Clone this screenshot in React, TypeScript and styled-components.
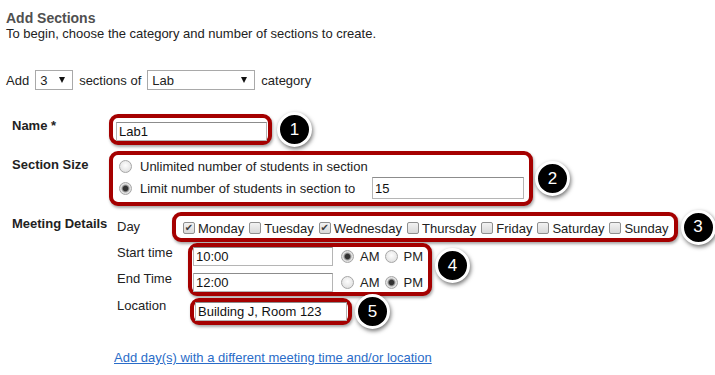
import styled, { createGlobalStyle } from 'styled-components'

const GlobalStyle = createGlobalStyle`
  body {
    margin: 0;
    background: #fff;
    font-family: 'Liberation Sans', Arial, sans-serif;
    font-size: 13px;
    color: #222;
  }
`

const Page = styled.div`
  width: 715px;
  height: 375px;
  box-sizing: border-box;
  padding: 10px 0 0 6px;
  overflow: hidden;
`

const Title = styled.h2`
  margin: 0;
  font-size: 14px;
  line-height: 16px;
  font-weight: bold;
  color: #505050;
`

const Intro = styled.p`
  margin: 0;
  line-height: 16px;
`

const AddRow = styled.div`
  display: flex;
  align-items: center;
  gap: 6px;
  height: 20px;
  margin-top: 28px;
`

const Select = styled.div<{ $w: number }>`
  display: flex;
  align-items: center;
  justify-content: space-between;
  width: ${(p) => p.$w}px;
  height: 20px;
  box-sizing: border-box;
  padding: 0 7px 0 4px;
  border: 1px solid #a9a9a9;
  background: #fff;

  &::after {
    content: '';
    border-left: 3.5px solid transparent;
    border-right: 3.5px solid transparent;
    border-top: 6px solid #111;
  }
`

const Form = styled.div`
  display: grid;
  grid-template-columns: 97px auto;
  row-gap: 6px;
  justify-items: start;
  margin-top: 24px;
  padding-left: 6px;
`

const FieldLabel = styled.div<{ $top: number }>`
  padding-top: ${(p) => p.$top}px;
  line-height: 16px;
  font-weight: bold;
`

const FieldRow = styled.div`
  display: flex;
  align-items: center;
`

const Highlight = styled.div`
  box-sizing: border-box;
  border: 4px solid #a50000;
  border-radius: 9px;
  background: #fff;
  box-shadow: 1px 2px 3px rgba(0, 0, 0, 0.35);
`

const NameBox = styled(Highlight)`
  display: flex;
  padding: 4px 1px 0 3px;
  height: 31px;
`

const SizeBox = styled(Highlight)`
  width: 424px;
  padding: 0 5px 3px 6px;
`

const DayBox = styled(Highlight)`
  display: flex;
  align-items: center;
  gap: 5px;
  height: 30px;
  padding: 2px 5px 0 7px;
`

const TimesBox = styled(Highlight)`
  display: flex;
  flex-direction: column;
  gap: 7px;
  padding: 0 5px 0 1px;
`

const LocationBox = styled(Highlight)`
  display: flex;
  padding: 0 1px;
`

// the numbered markers hang over the row edges, so they never stretch a row
const Callout = styled.span<{ $gap: number; $lift?: number }>`
  display: flex;
  align-items: center;
  justify-content: center;
  flex: none;
  width: 35px;
  height: 35px;
  box-sizing: border-box;
  margin: -6px 0 ${(p) => -6 + (p.$lift ?? 0)}px ${(p) => p.$gap}px;
  border: 3px solid #fff;
  border-radius: 50%;
  background: #000;
  box-shadow: 1px 2px 4px rgba(0, 0, 0, 0.55);
  color: #fff;
  font-size: 17px;
`

const TextInput = styled.input<{ $w: number; $h: number }>`
  width: ${(p) => p.$w}px;
  height: ${(p) => p.$h}px;
  box-sizing: border-box;
  margin: 0;
  padding: 0 2px;
  border: 1px solid #b5b5b5;
  border-top-color: #8c8c8c;
  font: 13px 'Liberation Sans', Arial, sans-serif;
  color: #111;
  outline: none;
`

const OptionRow = styled.label`
  display: flex;
  align-items: center;
  gap: 8px;
  height: 22px;
`

const Radio = styled.input.attrs({ type: 'radio' })`
  appearance: none;
  flex: none;
  width: 13px;
  height: 13px;
  margin: 0;
  border: 1px solid #a6a6a6;
  border-radius: 50%;
  background: radial-gradient(circle at 50% 40%, #fdfdfd 0%, #e6e6e6 65%, #d2d2d2 100%);

  &:checked {
    background: radial-gradient(circle, #333 0 2.2px, #8a8a8a 3.2px, #e4e4e4 4.5px, #d0d0d0 100%);
  }
`

const Checkbox = styled.input.attrs({ type: 'checkbox' })`
  appearance: none;
  display: inline-grid;
  place-content: center;
  flex: none;
  width: 12px;
  height: 12px;
  margin: 0 0 1px;
  border: 1px solid #8f8f8f;
  border-radius: 2px;
  background: linear-gradient(#f2f2f2, #d8d8d8);

  &:checked::after {
    content: '✔';
    font: 10px 'DejaVu Sans', sans-serif;
    line-height: 10px;
    color: #3c3c3c;
  }
`

const Stack = styled.div`
  display: flex;
  flex-direction: column;
  padding-left: 8px;
`

const SubRow = styled.div<{ $align: string; $space: number }>`
  display: flex;
  align-items: ${(p) => p.$align};
  margin-top: ${(p) => p.$space}px;
`

const SubLabel = styled.div<{ $w: number }>`
  flex: none;
  width: ${(p) => p.$w}px;
  line-height: 16px;
`

const TimeLabels = styled.div`
  display: flex;
  flex-direction: column;
  align-self: flex-start;
  gap: 10px;
  width: 71px;
  padding-top: 2px;
  line-height: 16px;
`

const DayOption = styled.label`
  display: flex;
  align-items: center;
  gap: 3px;
`

const TimeRow = styled.div`
  display: flex;
  align-items: center;
  gap: 5px;
  height: 19px;

  & > input[type='text'] {
    margin-right: 3px;
  }
`

const Meridiem = styled.label`
  display: flex;
  align-items: center;
  gap: 6px;
`

const MoreLink = styled.a`
  grid-column: 2;
  margin: 19px 0 0 5px;
  line-height: 16px;
  color: #2a6cc8;
  text-decoration: underline;
`

const days = [
  { name: 'Monday', on: true },
  { name: 'Tuesday', on: false },
  { name: 'Wednesday', on: true },
  { name: 'Thursday', on: false },
  { name: 'Friday', on: false },
  { name: 'Saturday', on: false },
  { name: 'Sunday', on: false },
]

const times = [
  { value: '10:00', pm: false },
  { value: '12:00', pm: true },
]

export default function App() {
  return (
    <Page>
      <GlobalStyle />
      <Title>Add Sections</Title>
      <Intro>To begin, choose the category and number of sections to create.</Intro>

      <AddRow>
        Add
        <Select $w={38}>3</Select>
        sections of
        <Select $w={108}>Lab</Select>
        category
      </AddRow>

      <Form>
        <FieldLabel $top={4}>Name *</FieldLabel>
        <FieldRow>
          <NameBox>
            <TextInput type="text" $w={151} $h={19} defaultValue="Lab1" readOnly />
          </NameBox>
          <Callout $gap={5}>1</Callout>
        </FieldRow>

        <FieldLabel $top={6}>Section Size</FieldLabel>
        <FieldRow>
          <SizeBox>
            <OptionRow>
              <Radio name="size" readOnly />
              Unlimited number of students in section
            </OptionRow>
            <OptionRow>
              <Radio name="size" defaultChecked />
              Limit number of students in section to
              <TextInput
                type="text"
                $w={152}
                $h={22}
                defaultValue="15"
                readOnly
                style={{ marginLeft: 'auto' }}
              />
            </OptionRow>
          </SizeBox>
          <Callout $gap={2}>2</Callout>
        </FieldRow>

        <FieldLabel $top={4}>Meeting Details</FieldLabel>
        <Stack>
          <SubRow $align="center" $space={0}>
            <SubLabel $w={55}>Day</SubLabel>
            <DayBox>
              {days.map((d) => (
                <DayOption key={d.name}>
                  <Checkbox defaultChecked={d.on} />
                  {d.name}
                </DayOption>
              ))}
            </DayBox>
            <Callout $gap={3}>3</Callout>
          </SubRow>

          <SubRow $align="center" $space={1}>
            <TimeLabels>
              <span>Start time</span>
              <span>End Time</span>
            </TimeLabels>
            <TimesBox>
              {times.map((t, i) => (
                <TimeRow key={t.value}>
                  <TextInput type="text" $w={140} $h={19} defaultValue={t.value} readOnly />
                  <Meridiem>
                    <Radio name={`ampm${i}`} defaultChecked={!t.pm} />
                    AM
                  </Meridiem>
                  <Meridiem>
                    <Radio name={`ampm${i}`} defaultChecked={t.pm} />
                    PM
                  </Meridiem>
                </TimeRow>
              ))}
            </TimesBox>
            <Callout $gap={3} $lift={8}>4</Callout>
          </SubRow>

          <SubRow $align="center" $space={2}>
            <SubLabel $w={73} style={{ alignSelf: 'flex-start' }}>Location</SubLabel>
            <LocationBox>
              <TextInput type="text" $w={152} $h={19} defaultValue="Building J, Room 123" readOnly />
            </LocationBox>
            <Callout $gap={3}>5</Callout>
          </SubRow>
        </Stack>

        <MoreLink href="#">Add day(s) with a different meeting time and/or location</MoreLink>
      </Form>
    </Page>
  )
}
